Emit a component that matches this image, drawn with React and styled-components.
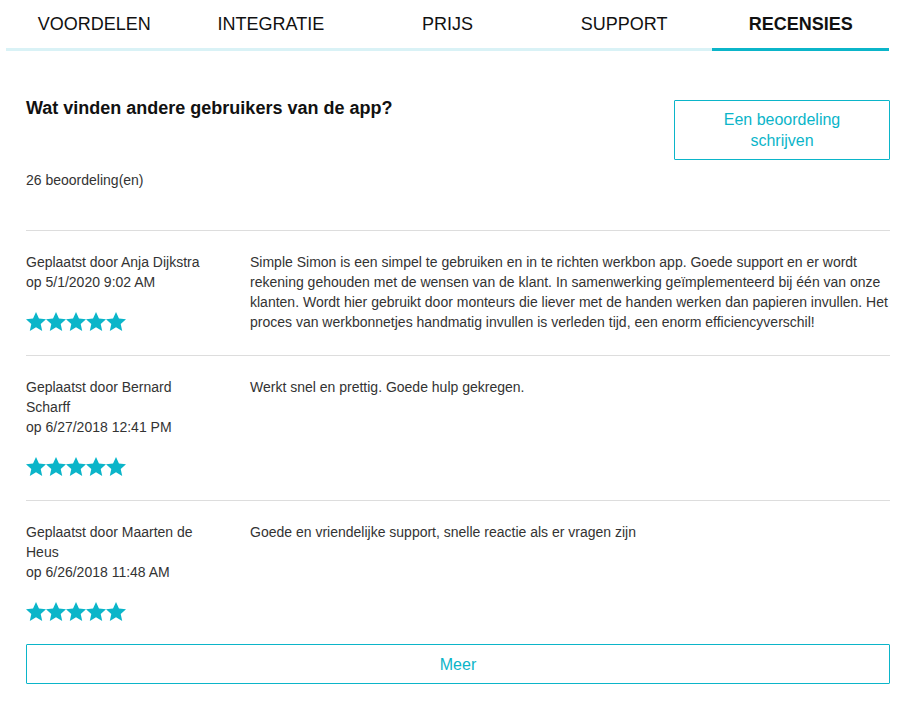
import styled, { createGlobalStyle } from "styled-components";

const ACCENT = "#0bb5c9";

const GlobalStyle = createGlobalStyle`
  body {
    margin: 0;
    background: #fff;
    font-family: "Liberation Sans", Arial, sans-serif;
    color: #333;
  }
`;

const TabBar = styled.nav`
  display: grid;
  grid-template-columns: repeat(5, 1fr);
  margin: 0 24px 0 6px;
  border-bottom: 3px solid #d9f2f6;
`;

const Tab = styled.div`
  height: 47px;
  padding-top: 1px;
  display: flex;
  align-items: center;
  justify-content: center;
  font-size: 18px;
  text-transform: uppercase;
  color: #111;
  font-weight: ${(p) => (p.$active ? 700 : 400)};
  border-bottom: 3px solid ${(p) => (p.$active ? ACCENT : "transparent")};
  margin-bottom: -3px;
`;

const Content = styled.section`
  padding: 49px 23px 0 26px;
`;

const HeaderRow = styled.div`
  display: flex;
  justify-content: space-between;
  align-items: flex-start;
`;

const Title = styled.h2`
  margin: 0;
  font-size: 18px;
  line-height: 16px;
  font-weight: 700;
  color: #111;
`;

const OutlineButton = styled.button`
  display: block;
  font-family: inherit;
  background: #fff;
  color: ${ACCENT};
  border: 1px solid ${ACCENT};
  border-radius: 1px;
  font-size: 16px;
  line-height: 21px;
  cursor: pointer;
  width: ${(p) => (p.$wide ? "100%" : "216px")};
  height: ${(p) => (p.$wide ? "40px" : "auto")};
  padding: ${(p) => (p.$wide ? "0" : "8px 20px")};
  margin-top: ${(p) => (p.$wide ? "-1px" : "0")};
`;

const Count = styled.div`
  font-size: 14px;
  line-height: 20px;
  margin-top: 10px;
  margin-bottom: 40px;
`;

const Review = styled.article`
  display: grid;
  grid-template-columns: 224px 1fr;
  border-top: 1px solid #ddd;
  padding: 21px 0 23px;
  font-size: 14px;
  line-height: 20px;
`;

const Author = styled.div`
  padding-right: 44px;
`;

const Stars = styled.div`
  display: flex;
  margin-top: 20px;
  height: 20px;
`;

const Body = styled.p`
  margin: 0;
`;

const Star = () => (
  <svg width="20" height="20" viewBox="1.2 1.2 21.6 21.6">
    <path
      fill={ACCENT}
      d="M12 1.2l3.2 7 7.6.8-5.7 5.1 1.6 7.5L12 17.8l-6.7 3.8 1.6-7.5L1.2 9l7.6-.8z"
    />
  </svg>
);

const tabs = ["Voordelen", "Integratie", "Prijs", "Support", "Recensies"];

const reviews = [
  {
    by: "Anja Dijkstra",
    date: "5/1/2020 9:02 AM",
    text: "Simple Simon is een simpel te gebruiken en in te richten werkbon app. Goede support en er wordt rekening gehouden met de wensen van de klant. In samenwerking geïmplementeerd bij één van onze klanten. Wordt hier gebruikt door monteurs die liever met de handen werken dan papieren invullen. Het proces van werkbonnetjes handmatig invullen is verleden tijd, een enorm efficiencyverschil!",
  },
  {
    by: "Bernard Scharff",
    date: "6/27/2018 12:41 PM",
    text: "Werkt snel en prettig. Goede hulp gekregen.",
  },
  {
    by: "Maarten de Heus",
    date: "6/26/2018 11:48 AM",
    text: "Goede en vriendelijke support, snelle reactie als er vragen zijn",
  },
];

export default function App() {
  return (
    <>
      <GlobalStyle />
      <TabBar>
        {tabs.map((t) => (
          <Tab key={t} $active={t === "Recensies"}>
            {t}
          </Tab>
        ))}
      </TabBar>
      <Content>
        <HeaderRow>
          <Title>Wat vinden andere gebruikers van de app?</Title>
          <OutlineButton>Een beoordeling schrijven</OutlineButton>
        </HeaderRow>
        <Count>26 beoordeling(en)</Count>
        {reviews.map((r) => (
          <Review key={r.by}>
            <Author>
              Geplaatst door {r.by}
              <br />
              op {r.date}
              <Stars>
                {[0, 1, 2, 3, 4].map((i) => (
                  <Star key={i} />
                ))}
              </Stars>
            </Author>
            <Body>{r.text}</Body>
          </Review>
        ))}
        <OutlineButton $wide>Meer</OutlineButton>
      </Content>
    </>
  );
}
